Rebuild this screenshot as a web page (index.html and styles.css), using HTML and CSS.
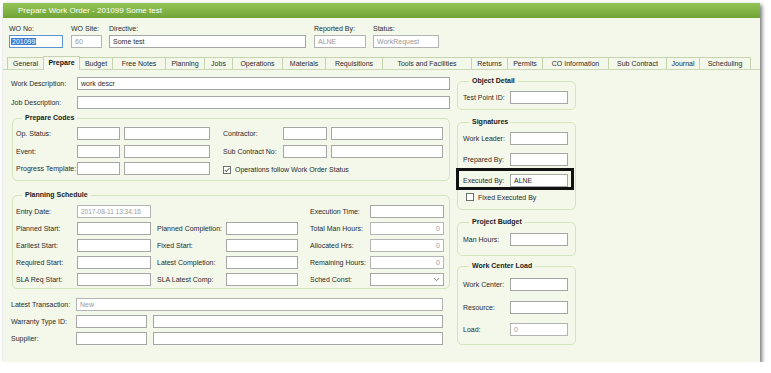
FILE: index.html
```html
<!DOCTYPE html>
<html lang="en">
<head>
    <meta charset="UTF-8">
    <title>Prepare Work Order</title>
    <link rel="stylesheet" href="styles.css">
</head>
<body>
    <div class="window">
        <div class="titlebar">Prepare Work Order - 201099 Some test</div>

        <!-- Header fields -->
        <div class="header">
            <div class="hfield w-wono">
                <div class="hlabel">WO No:</div>
                <div class="box focus"><span class="sel">201099</span></div>
            </div>
            <div class="hfield w-site">
                <div class="hlabel">WO Site:</div>
                <div class="box off">60</div>
            </div>
            <div class="hfield w-directive">
                <div class="hlabel">Directive:</div>
                <div class="box">Some test</div>
            </div>
            <div class="hfield w-reported">
                <div class="hlabel">Reported By:</div>
                <div class="box off">ALNE</div>
            </div>
            <div class="hfield w-status">
                <div class="hlabel">Status:</div>
                <div class="box off">WorkRequest</div>
            </div>
        </div>

        <!-- Tabs -->
        <div class="tabs">
            <div class="tab" style="width:36px">General</div>
            <div class="tab active" style="width:37px">Prepare</div>
            <div class="tab" style="width:33px">Budget</div>
            <div class="tab" style="width:53px">Free Notes</div>
            <div class="tab" style="width:39px">Planning</div>
            <div class="tab" style="width:28px">Jobs</div>
            <div class="tab" style="width:50px">Operations</div>
            <div class="tab" style="width:43px">Materials</div>
            <div class="tab" style="width:57px">Requisitions</div>
            <div class="tab" style="width:89px">Tools and Facilities</div>
            <div class="tab" style="width:36px">Returns</div>
            <div class="tab" style="width:35px">Permits</div>
            <div class="tab" style="width:66px">CO Information</div>
            <div class="tab" style="width:58px">Sub Contract</div>
            <div class="tab" style="width:33px">Journal</div>
            <div class="tab" style="width:52px">Scheduling</div>
        </div>

        <div class="panel">
            <!-- Left column -->
            <div class="main">
                <div class="row first">
                    <div class="label l-main">Work Description:</div>
                    <div class="box b-desc">work descr</div>
                </div>
                <div class="row second">
                    <div class="label l-main">Job Description:</div>
                    <div class="box b-desc"></div>
                </div>

                <fieldset class="group codes">
                    <legend>Prepare Codes</legend>
                    <div class="rows codes-rows">
                        <div class="row">
                            <div class="label l-col1">Op. Status:</div>
                            <div class="box b-code"></div>
                            <div class="box b-code-desc"></div>
                            <div class="label l-contr">Contractor:</div>
                            <div class="box b-contr"></div>
                            <div class="box b-contr-desc"></div>
                        </div>
                        <div class="row">
                            <div class="label l-col1">Event:</div>
                            <div class="box b-code"></div>
                            <div class="box b-code-desc"></div>
                            <div class="label l-contr">Sub Contract No:</div>
                            <div class="box b-contr"></div>
                            <div class="box b-contr-desc"></div>
                        </div>
                        <div class="row">
                            <div class="label l-col1">Progress Template:</div>
                            <div class="box b-code"></div>
                            <div class="box b-code-desc"></div>
                            <div class="check check-ops">
                                <svg class="cb" width="8" height="8" viewBox="0 0 8 8">
                                    <rect x="0.5" y="0.5" width="7" height="7" fill="#fff" stroke="#6f6f6f"/>
                                    <polyline points="1.8,4 3.3,5.6 6.3,2.2" fill="none" stroke="#333" stroke-width="1"/>
                                </svg>
                                <span>Operations follow Work Order Status</span>
                            </div>
                        </div>
                    </div>
                </fieldset>

                <fieldset class="group schedule">
                    <legend>Planning Schedule</legend>
                    <div class="rows sched-rows">
                        <div class="row">
                            <div class="label l-col1">Entry Date:</div>
                            <div class="box b-date off">2017-08-11 13:34:16</div>
                            <div class="spacer"></div>
                            <div class="label l-col3">Execution Time:</div>
                            <div class="box b-date"></div>
                        </div>
                        <div class="row">
                            <div class="label l-col1">Planned Start:</div>
                            <div class="box b-date"></div>
                            <div class="label l-col2">Planned Completion:</div>
                            <div class="box b-date2"></div>
                            <div class="label l-col3">Total Man Hours:</div>
                            <div class="box b-date off num">0</div>
                        </div>
                        <div class="row">
                            <div class="label l-col1">Earliest Start:</div>
                            <div class="box b-date"></div>
                            <div class="label l-col2">Fixed Start:</div>
                            <div class="box b-date2"></div>
                            <div class="label l-col3">Allocated Hrs:</div>
                            <div class="box b-date off num">0</div>
                        </div>
                        <div class="row">
                            <div class="label l-col1">Required Start:</div>
                            <div class="box b-date"></div>
                            <div class="label l-col2">Latest Completion:</div>
                            <div class="box b-date2"></div>
                            <div class="label l-col3">Remaining Hours:</div>
                            <div class="box b-date off num">0</div>
                        </div>
                        <div class="row">
                            <div class="label l-col1">SLA Req Start:</div>
                            <div class="box b-date"></div>
                            <div class="label l-col2">SLA Latest Comp:</div>
                            <div class="box b-date2"></div>
                            <div class="label l-col3">Sched Const:</div>
                            <div class="box b-date select">
                                <svg width="7" height="5" viewBox="0 0 7 5">
                                    <polyline points="1,1.2 3.5,3.6 6,1.2" fill="none" stroke="#777" stroke-width="1"/>
                                </svg>
                            </div>
                        </div>
                    </div>
                </fieldset>

                <div class="rows bottom-rows">
                    <div class="row">
                        <div class="label l-bottom">Latest Transaction:</div>
                        <div class="box b-trans off">New</div>
                    </div>
                    <div class="row">
                        <div class="label l-bottom">Warranty Type ID:</div>
                        <div class="box b-id"></div>
                        <div class="box b-id-desc"></div>
                    </div>
                    <div class="row">
                        <div class="label l-bottom">Supplier:</div>
                        <div class="box b-id"></div>
                        <div class="box b-id-desc"></div>
                    </div>
                </div>
            </div>

            <!-- Right column -->
            <div class="side">
                <fieldset class="group object">
                    <legend>Object Detail</legend>
                    <div class="row">
                        <div class="label l-side">Test Point ID:</div>
                        <div class="box b-side"></div>
                    </div>
                </fieldset>

                <fieldset class="group signatures">
                    <legend>Signatures</legend>
                    <div class="row">
                        <div class="label l-side">Work Leader:</div>
                        <div class="box b-side"></div>
                    </div>
                    <div class="row sig-row">
                        <div class="label l-side">Prepared By:</div>
                        <div class="box b-side"></div>
                    </div>
                    <div class="highlight">
                        <div class="row">
                            <div class="label l-side">Executed By:</div>
                            <div class="box b-side">ALNE</div>
                        </div>
                    </div>
                    <div class="check check-fixed">
                        <svg class="cb" width="8" height="8" viewBox="0 0 8 8">
                            <rect x="0.5" y="0.5" width="7" height="7" fill="#fff" stroke="#6f6f6f"/>
                        </svg>
                        <span>Fixed Executed By</span>
                    </div>
                </fieldset>

                <fieldset class="group budget">
                    <legend>Project Budget</legend>
                    <div class="row">
                        <div class="label l-side">Man Hours:</div>
                        <div class="box b-side"></div>
                    </div>
                </fieldset>

                <fieldset class="group load">
                    <legend>Work Center Load</legend>
                    <div class="row">
                        <div class="label l-side">Work Center:</div>
                        <div class="box b-side"></div>
                    </div>
                    <div class="row load-row2">
                        <div class="label l-side">Resource:</div>
                        <div class="box b-side"></div>
                    </div>
                    <div class="row load-row3">
                        <div class="label l-side">Load:</div>
                        <div class="box b-side off">0</div>
                    </div>
                </fieldset>
            </div>
        </div>
    </div>
</body>
</html>
```

FILE: styles.css
```css
body {
    margin: 0;
    background: #fff;
    font-family: "Liberation Sans", Arial, sans-serif;
    font-size: 7px;
    color: #2a2a2a;
}

.window {
    margin: 3px 0 0 3px;
    width: 757px;
    height: 359px;
    background: #f3f8ea;
    box-shadow: 2px 2px 4px rgba(0, 0, 0, 0.55);
}

.titlebar {
    height: 15px;
    line-height: 15px;
    padding-left: 15px;
    font-size: 8px;
    color: #fff;
    background: linear-gradient(#93c556, #70a236);
}

/* Header */
.header {
    display: flex;
    padding-left: 6px;
}

.hfield {
    margin-right: 7px;
}

.hlabel {
    margin-top: 6px;
    line-height: 10px;
    height: 10px;
}

.hfield .box {
    margin-top: 1px;
    width: 100%;
}

.w-wono { width: 54px; margin-right: 8px; }
.w-site { width: 31px; }
.w-directive { width: 197px; margin-right: 8px; }
.w-reported { width: 52px; }
.w-status { width: 66px; }

/* Input boxes */
.box {
    box-sizing: border-box;
    height: 13px;
    line-height: 11px;
    border: 1px solid #a6a6a6;
    background: #fff;
    padding: 0 3px;
    white-space: nowrap;
    overflow: hidden;
    flex: none;
}

.box.off {
    color: #9a9a9a;
    border-color: #b4b4b4;
}

.box.num {
    text-align: right;
}

.box.focus {
    border-color: #5b93d3;
    padding-left: 1px;
}

.sel {
    background: #3d7bd0;
    color: #fff;
    padding: 0 1px;
}

.box.select {
    display: flex;
    align-items: center;
    justify-content: flex-end;
    padding-right: 3px;
}

/* Tabs */
.tabs {
    display: flex;
    align-items: flex-end;
    height: 12px;
    margin-top: 9px;
    padding-left: 4px;
    border-bottom: 1px solid #cbd8b5;
}

.tab {
    box-sizing: border-box;
    height: 12px;
    line-height: 11px;
    text-align: center;
    border-top: 1px solid #c6d4ae;
    border-left: 1px solid #c6d4ae;
    white-space: nowrap;
    flex: none;
}

.tab:last-child {
    border-right: 1px solid #c6d4ae;
}

.tab.active {
    height: 14px;
    margin-bottom: -1px;
    line-height: 12px;
    font-weight: bold;
    background: #f5f9ee;
    color: #111;
    border-right: 1px solid #c6d4ae;
    margin-right: -1px;
    position: relative;
}

/* Panel */
.panel {
    display: flex;
}

.main {
    margin-left: 8px;
    width: 439px;
}

.side {
    margin-left: 7px;
    width: 119px;
}

.row {
    display: flex;
    align-items: center;
    height: 13px;
}

.label {
    flex: none;
    line-height: 13px;
    white-space: nowrap;
}

.rows {
    display: flex;
    flex-direction: column;
}

.first { margin-top: 7px; }
.second { margin-top: 6px; }

.l-main { width: 66px; }
.b-desc { width: 373px; }

/* Group boxes */
.group {
    margin: 0;
    padding: 0;
    border: 1px solid #d4e4bc;
    border-radius: 5px;
}

.group legend {
    margin-left: 6px;
    padding: 0 3px;
    line-height: 10px;
    font-weight: bold;
    color: #1a1a1a;
}

.codes {
    margin: 4px 0 0 1px;
    width: 438px;
    box-sizing: border-box;
    padding: 4px 0 5px 3px;
}

.codes-rows { gap: 4.5px; }

.l-col1 { width: 61px; }
.b-code { width: 43px; margin-right: 4px; }
.b-code-desc { width: 86px; margin-right: 13px; }
.l-contr { width: 60px; }
.b-contr { width: 44px; margin-right: 4px; }
.b-contr-desc { width: 112px; }

.check {
    display: flex;
    align-items: center;
}

.check .cb {
    flex: none;
    margin-right: 4px;
}

.check-ops {
    margin-top: 2px;
}

.schedule {
    margin: 9px 0 0 1px;
    width: 438px;
    box-sizing: border-box;
    padding: 5px 0 2px 3px;
}

.sched-rows { gap: 4px; }

.b-date { width: 74px; }
.b-date.off { font-size: 6.5px; }
.b-date.num { font-size: 7px; }
.spacer { width: 147px; flex: none; }
.l-col2 { width: 69px; margin-left: 6px; }
.b-date2 { width: 72px; }
.l-col3 { width: 60px; margin-left: 12px; }

.bottom-rows {
    margin-top: 9px;
    gap: 4px;
}

.l-bottom { width: 65px; }
.b-trans { width: 367px; }
.b-id { width: 71px; margin-right: 6px; }
.b-id-desc { width: 290px; }

/* Right column groups */
.side .group {
    padding: 5px 7px 5px 5px;
}

.l-side { width: 47px; }
.b-side { width: 58px; }

.object { margin-top: 6px; }

.signatures {
    margin-top: 7px;
}

.side .signatures { padding-bottom: 8px; }

.sig-row { margin-top: 8px; }

.highlight {
    margin: 2px -6px 0 -7px;
    padding: 3px 3px 0 4px;
    border: 3px solid #111;
}

.check-fixed {
    margin: 3px 0 0 3px;
    height: 8px;
}

.budget { margin-top: 7px; }
.side .budget { padding-top: 6px; padding-bottom: 9px; }

.load { margin-top: 5px; }
.side .load { padding-top: 7px; padding-bottom: 8px; }

.load-row2 { margin-top: 10px; }
.load-row3 { margin-top: 9px; }
```
